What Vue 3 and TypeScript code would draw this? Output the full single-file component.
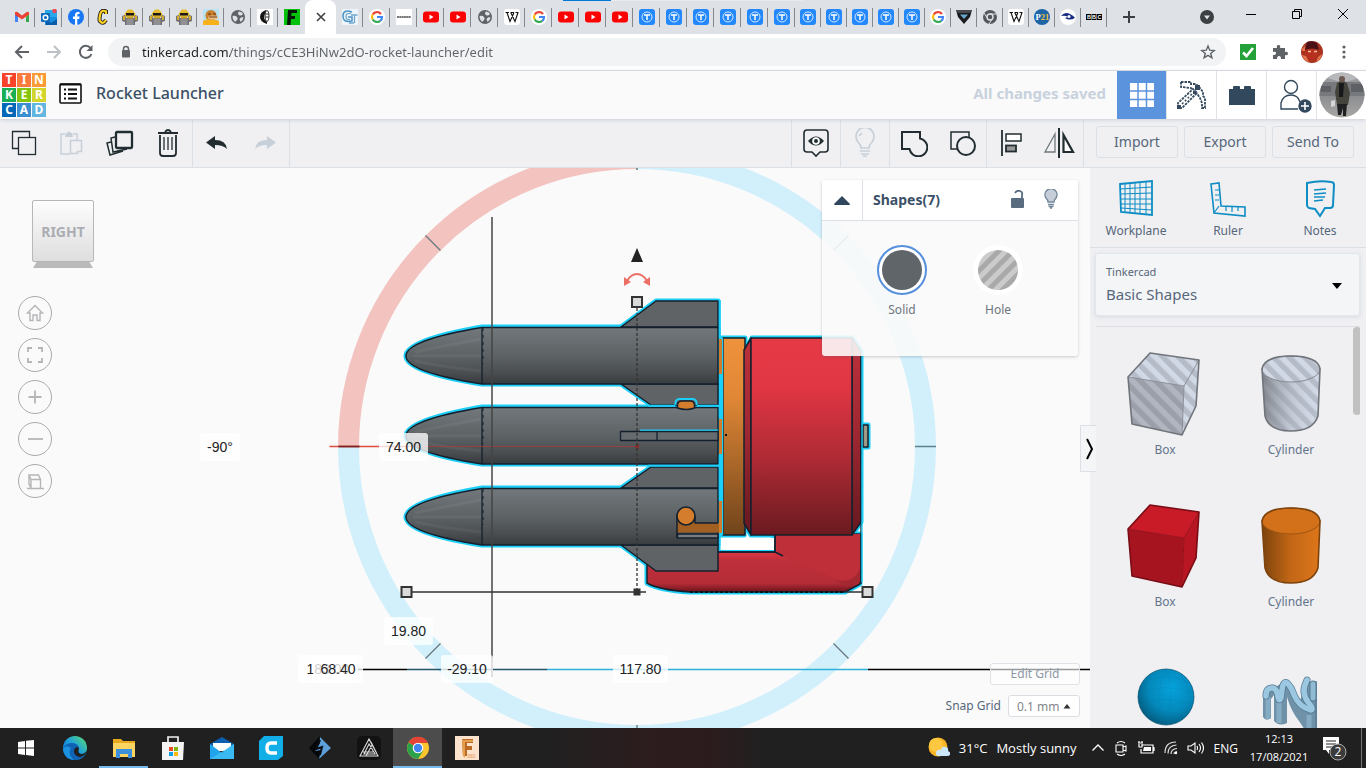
<script setup lang="ts">
import { ref } from 'vue'

const tabsBefore = ['gmail', 'outlook', 'facebook', 'comic', 'robot', 'robot', 'robot', 'dog', 'globe', 'ink', 'fgreen']
const tabsWide = ['gt', 'google', 'creality', 'youtube', 'youtube', 'globe', 'wiki', 'google', 'youtube', 'youtube', 'youtube', 'tee', 'tee', 'tee', 'tee', 'tee', 'tee']
const tabsNarrow = ['tee', 'tee', 'tee', 'tee', 'tee', 'google', 'gem', 'chromium', 'wiki', 'p21', 'eye', 'bbc']

const url = ref('tinkercad.com/things/cCE3HiNw2dO-rocket-launcher/edit')

const logo = [
  { ch: 'T', bg: '#f8432a' }, { ch: 'I', bg: '#fb7b3c' }, { ch: 'N', bg: '#fb9b35' },
  { ch: 'K', bg: '#1aae54' }, { ch: 'E', bg: '#85c40c' }, { ch: 'R', bg: '#d3d52c' },
  { ch: 'C', bg: '#0368b8' }, { ch: 'A', bg: '#3b8fd0' }, { ch: 'D', bg: '#62b6e0' },
]

const viewButtons = ['home', 'fit', 'plus', 'minus', 'ortho']
const viewTitles = ['Home view', 'Fit all in view', 'Zoom in', 'Zoom out', 'Switch to flat view']

interface Dim { x: number; y: number; w: number; value: string; name: string }
const stage = { w: 1090, h: 560 }
const dims: Dim[] = [
  { x: 200, y: 265, w: 40, value: '-90°', name: 'Rotation' },
  { x: 379, y: 265, w: 49, value: '74.00', name: 'Height' },
  { x: 384, y: 449, w: 49, value: '19.80', name: 'Elevation' },
  { x: 298, y: 487, w: 60, value: '183.00', name: 'Offset X' },
  { x: 313, y: 487, w: 50, value: '68.40', name: 'Length' },
  { x: 441, y: 487, w: 52, value: '-29.10', name: 'Offset Y' },
  { x: 613, y: 487, w: 55, value: '117.80', name: 'Width' },
]
function place(d: Dim) {
  return { left: (d.x / stage.w) * 100 + '%', top: (d.y / stage.h) * 100 + '%', width: d.w + 'px' }
}

const rockets = [0, 80, 161]

interface Shape { id: string; name: string; caption: boolean }
const shapes: Shape[] = [
  { id: 'box-hole', name: 'Box', caption: true }, { id: 'cyl-hole', name: 'Cylinder', caption: true },
  { id: 'box-red', name: 'Box', caption: true }, { id: 'cyl-orange', name: 'Cylinder', caption: true },
  { id: 'sphere', name: 'Sphere', caption: false }, { id: 'scribble', name: 'Scribble', caption: false },
]
const category = ref('Basic Shapes')
const snap = ref('0.1 mm')
const apps = ['windows', 'edge', 'explorer', 'store', 'mail', 'cura', 'flash', 'affinity', 'chrome', 'fusion']
</script>

<template>
  <svg class="defs" aria-hidden="true">
    <defs>
      <linearGradient id="grey" x1="0" y1="0" x2="0" y2="1"><stop offset="0" stop-color="#72787b" /><stop offset=".5" stop-color="#5d6265" /><stop offset=".8" stop-color="#4a4e50" /><stop offset="1" stop-color="#383b3d" /></linearGradient>
      <linearGradient id="drum" x1="0" y1="0" x2="0" y2="1"><stop offset="0" stop-color="#e63946" /><stop offset=".25" stop-color="#e03643" /><stop offset=".6" stop-color="#b02b35" /><stop offset="1" stop-color="#6a1a20" /></linearGradient>
      <linearGradient id="drumside" x1="0" y1="0" x2="0" y2="1"><stop offset="0" stop-color="#bd303b" /><stop offset=".5" stop-color="#9d2731" /><stop offset="1" stop-color="#64181e" /></linearGradient>
      <linearGradient id="plate" x1="0" y1="0" x2="0" y2="1"><stop offset="0" stop-color="#ef923c" /><stop offset=".3" stop-color="#e08736" /><stop offset="1" stop-color="#70441b" /></linearGradient>
      <linearGradient id="base" x1="0" y1="0" x2="0" y2="1"><stop offset="0" stop-color="#bd2f3a" /><stop offset=".35" stop-color="#d93441" /><stop offset=".45" stop-color="#bf303b" /><stop offset=".85" stop-color="#b42c36" /><stop offset="1" stop-color="#6c131c" /></linearGradient>
      <linearGradient id="cylo" x1="0" x2="1"><stop offset="0" stop-color="#7d430c" /><stop offset=".5" stop-color="#c36716" /><stop offset="1" stop-color="#dd761a" /></linearGradient>
      <linearGradient id="cylg" x1="0" x2="1"><stop offset="0" stop-color="#70747b" stop-opacity=".8" /><stop offset=".55" stop-color="#a5abb5" stop-opacity=".3" /><stop offset="1" stop-color="#c8d0de" stop-opacity="0" /></linearGradient>
      <radialGradient id="ball" cx=".6" cy=".35" r=".75"><stop offset="0" stop-color="#05a2dc" /><stop offset=".55" stop-color="#0488ba" /><stop offset="1" stop-color="#02506f" /></radialGradient>
      <pattern id="hatch" width="11" height="11" patternUnits="userSpaceOnUse" patternTransform="rotate(-45)"><rect width="11" height="11" fill="#d2d9e6" /><rect width="5.5" height="11" fill="#b5bcc8" /></pattern>
      <pattern id="hatchd" width="11" height="11" patternUnits="userSpaceOnUse" patternTransform="rotate(-45)"><rect width="11" height="11" fill="#b0b5c0" /><rect width="5.5" height="11" fill="#9a9fa9" /></pattern>
      <pattern id="holes" width="10" height="10" patternUnits="userSpaceOnUse" patternTransform="rotate(45)"><rect width="10" height="10" fill="#cbcbcb" /><rect width="5" height="10" fill="#a9a9a9" /></pattern>
      <linearGradient id="edgeg" x1="0" x2="1" y1="1" y2="0"><stop offset="0" stop-color="#0c59a4" /><stop offset=".5" stop-color="#1b9de2" /><stop offset="1" stop-color="#5ee06a" /></linearGradient>
      <linearGradient id="foto" x1="0" x2="0" y1="0" y2="1"><stop offset="0" stop-color="#a2a3a6" /><stop offset=".5" stop-color="#8b8c8f" /><stop offset="1" stop-color="#a9a8a7" /></linearGradient>

      <!-- favicons -->
      <symbol id="f-gmail" viewBox="0 0 16 16"><path d="M1 3v10h3V7z" fill="#4285f4" /><path d="M12 7v6h3V3z" fill="#34a853" /><path d="M1 3v2.500l3 2.500V3.500z" fill="#c5221f" /><path d="M12 4l3-1v2.500l-3 2.500z" fill="#fbbc04" /><path d="M1 3.500Q2.500 2 4 3.500l4 3 4-3Q13.500 2 15 3.500v2L8 10.500 1 5.500z" fill="#ea4335" /></symbol>
      <symbol id="f-outlook" viewBox="0 0 16 16"><rect x="4" y="1" width="12" height="13" fill="#28a8ea" /><path d="M4 8l12 0v8H4z" fill="#1490df" /><path d="M5 10l5 4 6-4v6H5z" fill="#0a5ba8" /><rect y="4" width="9" height="9" rx="1" fill="#0f6cbd" /><circle cx="4.500" cy="8.500" r="2.300" fill="none" stroke="#fff" stroke-width="1.400" /><circle cx="13.500" cy="2" r="2.300" fill="#e94b55" /></symbol>
      <symbol id="f-facebook" viewBox="0 0 16 16"><circle cx="8" cy="8" r="8" fill="#1877f2" /><path d="M7 16V10H5V7.500h2V6q0-3 3-3h1.500v2H10.300q-1 0-1 1v1.500h2.300L11.200 10H9.300v6z" fill="#fff" /></symbol>
      <symbol id="f-comic" viewBox="0 0 16 16"><path d="M11 5V2.500Q6 0 5 6t0 6q3 4 6-1" fill="none" stroke="#222" stroke-width="4" /><path d="M11 5V2.500Q6 0 5 6t0 6q3 4 6-1" fill="none" stroke="#ffd21f" stroke-width="2.200" /></symbol>
      <symbol id="f-robot" viewBox="0 0 16 16"><path d="M3 4l3-3.500h4L13 4l1 4H2z" fill="#e8bd32" /><path d="M0 7l3-1 1 3h8l1-3 3 1v5l-3 1v3H3v-3l-3-1z" fill="#6f6f72" /><path d="M1 7h2v4H1zM13 7h2v4h-2z" fill="#d1ac34" /><rect x="4" y="4" width="8" height="2.500" fill="#1b1a18" /><path d="M5 7.500h6v2H5z" fill="#caa22a" /><path d="M4.500 11h7M4.500 13h7M4.500 15h7" stroke="#c4c4c4" stroke-width=".8" /></symbol>
      <symbol id="f-dog" viewBox="0 0 16 16"><rect width="16" height="16" fill="#b9e1f4" /><circle cx="8" cy="6.500" r="5.500" fill="#c9812d" /><path d="M0 16v-4q4-3 8-1 4-1 8 1v4z" fill="#f6b11b" /><ellipse cx="10" cy="8.500" rx="5" ry="2" fill="#efc48c" /><path d="M5 5h3M10 5h3M6 8h8" stroke="#6b3210" /></symbol>
      <symbol id="f-globe" viewBox="0 0 16 16"><circle cx="8" cy="8" r="7" fill="#5f6368" /><path d="M2.500 7q3-1 4.500 1t-1 4l-1 1Q2 10 2.500 7zM9 2.500q-2 2 0 3.500t4-1L12 3.500zM13.500 8q-3 0-4 2l1 3q3-2 3-5z" fill="#dee1e6" /></symbol>
      <symbol id="f-ink" viewBox="0 0 16 16"><rect width="16" height="16" fill="#fff" /><path d="M9 1Q3 3 3 8t7 7V12Q7 11 7 8t3-4z" fill="#161616" /><ellipse cx="10" cy="7" rx="2" ry="5.500" fill="#fff" stroke="#333" /><path d="M8 8h4M8 5h4" stroke="#333" /></symbol>
      <symbol id="f-fgreen" viewBox="0 0 16 16"><rect width="16" height="16" fill="#05c10b" /><path d="M3 16L4 1h9v3H7.500L7.300 7H11v3H7L6.500 16z" fill="#06170a" /></symbol>
      <symbol id="f-gt" viewBox="0 0 16 16"><rect width="16" height="16" fill="#edf5fa" /><path d="M10 3Q1 0 1 7t9 5V8H6" fill="none" stroke="#4f93c5" stroke-width="1.500" /><path d="M9 4.500q-5-1-5 3t4 3M9 6h6.500M12.500 6v8M7 14h5" stroke="#70a8cf" stroke-width="1.300" fill="none" /></symbol>
      <symbol id="f-google" viewBox="0 0 16 16"><circle cx="8" cy="8" r="8" fill="#fff" /><path d="M12 5A5 5 0 0 0 3.700 5.500" stroke="#ea4335" stroke-width="2.200" fill="none" /><path d="M3.700 5.500a5 5 0 0 0 0 5" stroke="#fbbc05" stroke-width="2.200" fill="none" /><path d="M3.700 10.500a5 5 0 0 0 7.600 1.300" stroke="#34a853" stroke-width="2.200" fill="none" /><path d="M11.300 11.800Q13 10.500 13 8H8" stroke="#4285f4" stroke-width="2.200" fill="none" /></symbol>
      <symbol id="f-creality" viewBox="0 0 16 16"><rect width="16" height="16" fill="#fff" /><path d="M1 8h14" stroke="#4a4a4a" stroke-width="1.500" stroke-dasharray="2 .3" /></symbol>
      <symbol id="f-youtube" viewBox="0 0 16 16"><rect y="2.500" width="16" height="11" rx="3" fill="#f00" /><path d="M6.500 5.500v5l4-2.500z" fill="#fff" /></symbol>
      <symbol id="f-wiki" viewBox="0 0 16 16"><rect width="16" height="16" rx="3" fill="#fff" /><path d="M1.500 3.500H5M6.500 3.500h3.500M11.500 3.500h3M3 3.500l3 9 4-9M6.800 3.500l4.200 9 3-9" stroke="#111" stroke-width="1.100" fill="none" /></symbol>
      <symbol id="f-tee" viewBox="0 0 16 16"><rect width="16" height="16" rx="3" fill="#2388fb" /><circle cx="8" cy="8" r="5" fill="none" stroke="#d6e9ff" /><path d="M5 6h6M8 6v5" stroke="#fff" stroke-width="1.500" /></symbol>
      <symbol id="f-gem" viewBox="0 0 16 16"><path d="M0 1h16l-2 7-6 7-6-7z" fill="#1b1b1d" /><path d="M4 5.500h8L8 10z" fill="#69a9cd" /><path d="M0 1h16l-2 3H2z" fill="#4a4b4f" /></symbol>
      <symbol id="f-chromium" viewBox="0 0 16 16"><circle cx="8" cy="8" r="7" fill="#54575c" /><circle cx="8" cy="8" r="3" fill="#54575c" stroke="#dee1e6" stroke-width="1.400" /><path d="M8 5h6.500M5.500 9.500L2 4M10.500 9.500L7 15" stroke="#dee1e6" /></symbol>
      <symbol id="f-p21" viewBox="0 0 16 16"><circle cx="8" cy="8" r="8" fill="#1e65a8" /><text x="1.500" y="11" font-family="Liberation Serif" font-weight="700" font-size="8.500" fill="#fff">P<tspan fill="#f2c43b">21</tspan></text></symbol>
      <symbol id="f-eye" viewBox="0 0 16 16"><circle cx="8" cy="8" r="8" fill="#fff" /><path d="M1 7q4-5 9-2 4 2 5 4-6 3-10 0l3-1Q5 6 1 7z" fill="#182b83" /><circle cx="9" cy="7.500" r="1.500" fill="#fff" /></symbol>
      <symbol id="f-bbc" viewBox="0 0 16 16"><path d="M0 5h5v6H0zM5.500 5h5v6h-5zM11 5h5v6h-5z" fill="#000" /><g font-family="Liberation Sans" font-weight="700" font-size="5.500" fill="#fff"><text x="1" y="10">B</text><text x="6" y="10">B</text><text x="11.500" y="10">C</text></g></symbol>

      <!-- camera controls -->
      <symbol id="v-home" viewBox="0 0 34 34"><path d="M9.500 17L17 9.500 24.500 17H22v7.500h-3V19h-4v5.500h-3V17z" fill="none" stroke="#b5b5b8" stroke-width="1.400" /></symbol>
      <symbol id="v-fit" viewBox="0 0 34 34"><path d="M10 14v-4h4M20 10h4v4M24 20v4h-4M14 24h-4v-4" fill="none" stroke="#b5b5b8" stroke-width="1.800" /></symbol>
      <symbol id="v-plus" viewBox="0 0 34 34"><path d="M10.500 17h13M17 10.500v13" stroke="#b5b5b8" stroke-width="1.800" /></symbol>
      <symbol id="v-minus" viewBox="0 0 34 34"><path d="M10 17h15" stroke="#b5b5b8" stroke-width="1.800" /></symbol>
      <symbol id="v-ortho" viewBox="0 0 34 34"><path d="M9 24.500h17M13 24.500v-9h9.500v9M13 15.500l-2-4.500h9.500l2 4.500M11 11v9l2 4" fill="none" stroke="#b5b5b8" stroke-width="1.400" /></symbol>

      <!-- library shapes -->
      <symbol id="s-box-hole" viewBox="0 0 90 96"><path d="M8 28L30 4l49 7-3 46-14 29-50-11z" fill="url(#hatch)" /><path d="M8 28l56 9-2 49-50-11z" fill="url(#hatchd)" /><path d="M8 28l56 9L79 11M64 37l-2 49" stroke="#8b9098" fill="none" /><path d="M8 28L30 4l49 7-3 46-14 29-50-11z" fill="none" stroke="#70757b" stroke-width="1.600" stroke-linejoin="round" /></symbol>
      <symbol id="s-box-red" viewBox="0 0 90 96"><path d="M8 28L30 4l49 7-15 26z" fill="#c81a27" /><path d="M8 28l56 9-2 49-50-11z" fill="#a6141f" /><path d="M64 37L79 11l-3 46-14 29z" fill="#b91623" /><path d="M8 28l56 9L79 11M64 37l-2 49" stroke="#980f1b" fill="none" /><path d="M8 28L30 4l49 7-3 46-14 29-50-11z" fill="none" stroke="#780d16" stroke-width="1.600" stroke-linejoin="round" /></symbol>
      <symbol id="s-cyl-hole" viewBox="0 0 90 96"><path d="M16 20l3 47q4 14 26 15t27-15l2-47z" fill="url(#hatch)" /><path d="M16 20l3 47q4 14 26 15t27-15l2-47z" fill="url(#cylg)" /><ellipse cx="45" cy="20" rx="29" ry="13" fill="url(#hatch)" stroke="#858a92" /><path d="M16 20Q18 7 45 7t29 13l-2 47q-5 15-27 15T19 67z" fill="none" stroke="#70757b" stroke-width="1.600" /></symbol>
      <symbol id="s-cyl-orange" viewBox="0 0 90 96"><path d="M16 20l3 47q4 14 26 15t27-15l2-47z" fill="url(#cylo)" /><ellipse cx="45" cy="20" rx="29" ry="13" fill="#d27119" stroke="#a05511" /><path d="M16 20Q18 7 45 7t29 13l-2 47q-5 15-27 15T19 67z" fill="none" stroke="#7d430d" stroke-width="1.600" /></symbol>
      <symbol id="s-sphere" viewBox="0 0 90 96"><g transform="translate(0 3)"><circle cx="46" cy="41" r="28" fill="url(#ball)" stroke="#034f70" stroke-width=".7" /><path d="M22 27q24-12 48 0M18 38q28-13 56 0M19 49q27-11 54 0M26 60q20-8 40 0M46 13q-14 28 0 56M46 13q10 28 0 56M35 16q-24 25 0 50M58 16q22 25 0 50" fill="none" stroke="#037aa8" stroke-width=".5" opacity=".4" /></g></symbol>
      <symbol id="s-scribble" viewBox="0 0 90 96">
        <path d="M17 42v22q3 5 8 1V46l3-4v26q5 6 13 2V44q4 14 12 24l8 12h10V28l-8 2-6 8-3 10-14-18H36z" fill="#6f92a8" />
        <path d="M22 44v22M33 50v20M63 62v18" stroke="#86acc4" stroke-width="5" />
        <path d="M70 30v50" stroke="#5f8298" stroke-width="2" />
        <g fill="none" stroke-linecap="round" stroke-linejoin="round">
          <path d="M20 43q0-9 7-8 4 1 5 9 1 5 3 1l1-8q1-9 5-7 4 3 7 12 5 12 17 15 3-1-3-8-6-8-3-17l2-5M67 31v14" stroke="#557b92" stroke-width="7" />
          <path d="M20 43q0-9 7-8 4 1 5 9 1 5 3 1l1-8q1-9 5-7 4 3 7 12 5 12 17 15 3-1-3-8-6-8-3-17l2-5" stroke="#9cc7e1" stroke-width="5.500" />
          <path d="M67 31v14" stroke="#91bad3" stroke-width="5" />
        </g>
      </symbol>

      <!-- taskbar -->
      <symbol id="t-windows" viewBox="0 0 24 24"><path d="M4 6l7-1v6.500H4zM12 4.800L20 4v7.500h-8zM4 12.500h7V19l-7-1zM12 12.500h8V20l-8-1z" fill="#fff" /></symbol>
      <symbol id="t-edge" viewBox="0 0 24 24"><circle cx="12" cy="12" r="12" fill="url(#edgeg)" /><path d="M0 13Q3 6 10 7q6 1 6 6-2 4 2 5t5-1q-3 7-11 7Q1 24 0 13z" fill="#0f62b4" /><path d="M8 12q-4 6 3 12Q1 23 0 13q3-5 8-1z" fill="#1a92df" /><path d="M16 13q-2 4 2 5 4 0 6-4l-1 3q-3 4-7 4-6-2-5-7 1-3 4-3z" fill="#202020" /></symbol>
      <symbol id="t-explorer" viewBox="0 0 24 24"><path d="M1 3h8l2 2h12v16H1z" fill="#e9a91e" /><path d="M1 7h22v14H1z" fill="#fcd462" /><path d="M4 13h16v9h-4v-4H8v4H4z" fill="#3c8fdb" /></symbol>
      <symbol id="t-store" viewBox="0 0 24 24"><path d="M7 6V1h10v5" fill="none" stroke="#f0f0f0" stroke-width="1.700" /><path d="M1 6h22l-1 18H1z" fill="#f4f4f4" /><path d="M8 11h4v4H8z" fill="#e74c25" /><path d="M13 11h4v4h-4z" fill="#7cb80b" /><path d="M8 16h4v4H8z" fill="#0fa2e9" /><path d="M13 16h4v4h-4z" fill="#fab80b" /></symbol>
      <symbol id="t-mail" viewBox="0 0 24 24"><path d="M0 8l12-7 12 7v5H0z" fill="#0e5faf" /><path d="M3 7h18v8H3z" fill="#fff" /><path d="M0 8l12 9L24 8v15H0z" fill="#22a4ec" /><path d="M0 23l24-15v15z" fill="#43c3f5" opacity=".7" /></symbol>
      <symbol id="t-cura" viewBox="0 0 24 24"><path d="M5 0h19v20l-5 4H0V5z" fill="#11aee8" /><path d="M18 7h-6q-4 0-4 5t4 5h6" fill="none" stroke="#fff" stroke-width="3.500" /></symbol>
      <symbol id="t-flash" viewBox="0 0 24 24"><path d="M12 0L1 12l11 12V14l-4 1z" fill="#060709" /><path d="M12 1v6l-5 8 6-1-2 9 12-11z" fill="#5d9fd8" /><path d="M12 4l-4 9 6-2-2 8" fill="none" stroke="#0a0d12" stroke-width="2" /></symbol>
      <symbol id="t-affinity" viewBox="0 0 24 24"><rect width="24" height="24" rx="5" fill="#121212" /><path d="M12 3L3 20h18zM12 8L7 18h11zM9 20l6-11M6 16h10M14 6l6 12" fill="none" stroke="#ddd" stroke-width="1.100" /></symbol>
      <symbol id="t-chrome" viewBox="0 0 24 24"><circle cx="12" cy="12" r="11" fill="#fbc52d" /><path d="M12 12L2.500 6.500A11 11 0 0 1 22 7H12z" fill="#e54335" /><path d="M12 12l-9.500-5.500A11 11 0 0 0 12 23l5-8z" fill="#2ca14c" /><circle cx="12" cy="12" r="5.300" fill="#fff" /><circle cx="12" cy="12" r="4.200" fill="#4285f4" /></symbol>
      <symbol id="t-fusion" viewBox="0 0 24 24"><rect width="24" height="24" fill="#fbe3ce" /><path d="M7 3h11v4h-6v3h5v4h-5v6H8z" fill="#b96a24" /><path d="M7 3l3 2v17l-2-2zM9 4h9v2H9z" fill="#e59d4f" /><text x="12" y="22" font-family="Liberation Sans" font-size="5" fill="#e98f44">360</text></symbol>
    </defs>
  </svg>

  <div class="desktop">
    <div class="tabstrip">
      <div class="loadbar"><i></i></div>
      <button v-for="(t, i) in tabsBefore" :key="'a' + i" class="tab" :class="{ last: i === 10 }" :aria-label="t"><svg width="16" height="16"><use :href="'#f-' + t" /></svg></button>
      <button class="tab active" aria-label="Close tab"><svg width="12" height="12" viewBox="0 0 12 12"><path d="M2 2l8 8M10 2l-8 8" stroke="#3c4043" stroke-width="1.600" /></svg></button>
      <button v-for="(t, i) in tabsWide" :key="'b' + i" class="tab" :aria-label="t"><svg width="16" height="16"><use :href="'#f-' + t" /></svg></button>
      <button v-for="(t, i) in tabsNarrow" :key="'c' + i" class="tab narrow" :aria-label="t"><svg width="16" height="16"><use :href="'#f-' + t" /></svg></button>
      <button class="newtab" aria-label="New tab"><svg width="14" height="14" viewBox="0 0 14 14"><path d="M7 1v12M1 7h12" stroke="#3c4043" stroke-width="2" /></svg></button>
      <div class="grow"></div>
      <button class="tabsearch" aria-label="Search tabs"><svg width="14" height="14" viewBox="0 0 14 14"><circle cx="7" cy="7" r="7" fill="#3c4043" /><path d="M4 5.500h6L7 9.500z" fill="#dee1e6" /></svg></button>
      <button class="win" aria-label="Minimise"><svg width="12" height="12" viewBox="0 0 12 12"><path d="M1 6.500h10" stroke="#000" /></svg></button>
      <button class="win" aria-label="Restore"><svg width="12" height="12" viewBox="0 0 12 12"><path d="M1.500 3.500h7v7h-7zM3.500 3.500v-2h7v7h-2" fill="none" stroke="#000" /></svg></button>
      <button class="win" aria-label="Close"><svg width="12" height="12" viewBox="0 0 12 12"><path d="M1 1l10 10M11 1L1 11" stroke="#000" /></svg></button>
    </div>

    <div class="navbar">
      <button class="nav" aria-label="Back"><svg width="16" height="16" viewBox="0 0 16 16"><path d="M15 8H2M8 2L2 8l6 6" fill="none" stroke="#5f6368" stroke-width="2" /></svg></button>
      <button class="nav" aria-label="Forward"><svg width="16" height="16" viewBox="0 0 16 16"><path d="M1 8h13M8 2l6 6-6 6" fill="none" stroke="#bdc1c6" stroke-width="2" /></svg></button>
      <button class="nav" aria-label="Reload"><svg width="16" height="16" viewBox="0 0 16 16"><path d="M13.500 10A6 6 0 1 1 12.500 4" fill="none" stroke="#5f6368" stroke-width="2" /><path d="M14.500 1v6h-6z" fill="#5f6368" /></svg></button>
      <div class="omnibox">
        <svg width="12" height="14" viewBox="0 0 12 14"><path d="M3.500 6V4a2.500 2.500 0 0 1 5 0v2" fill="none" stroke="#5f6368" stroke-width="1.500" /><rect x="2" y="5" width="8" height="7.500" rx="1" fill="#5f6368" /></svg>
        <input v-model="url" aria-label="Address" spellcheck="false" />
        <button aria-label="Bookmark"><svg width="16" height="16" viewBox="0 0 16 16"><path d="M8 2l1.700 4.200 4.500.3-3.500 2.900 1.200 4.400L8 11.400l-3.900 2.400 1.200-4.400L1.800 6.500l4.500-.3z" fill="none" stroke="#5f6368" stroke-width="1.400" /></svg></button>
      </div>
      <button class="nav" aria-label="Checker"><svg width="16" height="16" viewBox="0 0 16 16"><rect width="16" height="16" fill="#25a13a" /><path d="M3 8.500l3.500 3.500L13 4" fill="none" stroke="#fff" stroke-width="2.600" /></svg></button>
      <button class="nav" aria-label="Extensions"><svg width="16" height="16" viewBox="0 0 16 16"><path d="M1 4h4q-1-3 1.500-3T8 4h5v4q3-1 3 1.500T13 11v4H9q0-3-2-3t-2 3H1v-4q3 0 3-2T1 8z" fill="#5f6368" /></svg></button>
      <button class="nav" aria-label="Profile"><svg width="22" height="22" viewBox="0 0 22 22"><circle cx="11" cy="11" r="11" fill="#a83420" /><path d="M6 1q5-2 10 1l2 7q-7-3-14 0z" fill="#4a1016" /><path d="M5 9q6-2 12 0v4q-2 6-6 7-4-1-6-7z" fill="#b5301f" /><path d="M7 10.500h3M13 10.500h3" stroke="#ffc29a" stroke-width="1.700" /><path d="M1 14l4 1 3 6Q3 20 1 14zM21 13l-4 3-2 5q5-2 6-8zM1 8l3-3v5H1z" fill="#e5744d" /></svg></button>
      <button class="nav" aria-label="Menu"><svg width="4" height="16" viewBox="0 0 4 16"><circle cx="2" cy="3" r="1.600" fill="#5f6368" /><circle cx="2" cy="8" r="1.600" fill="#5f6368" /><circle cx="2" cy="13" r="1.600" fill="#5f6368" /></svg></button>
    </div>

    <header class="head">
      <a href="#" class="logo" aria-label="Tinkercad home"><span v-for="c in logo" :key="c.ch" :style="{ background: c.bg }">{{ c.ch }}</span></a>
      <button class="list" aria-label="Designs"><svg width="24" height="22" viewBox="0 0 24 22"><rect x="1" y="1" width="21" height="19" rx="1" fill="#fff" stroke="#111" stroke-width="1.600" /><path d="M1 1.500h21" stroke="#111" stroke-width="2" /><path d="M5 6.500h2M5 11h2M5 15.500h2M9 6.500h9M9 11h9M9 15.500h9" stroke="#111" stroke-width="2" /></svg></button>
      <h1>Rocket Launcher</h1>
      <div class="grow"></div>
      <span class="saved">All changes saved</span>
      <button class="mode on" aria-label="3D design"><svg width="26" height="26" viewBox="0 0 26 26"><rect x="1" y="1" width="24" height="24" fill="#fff" /><path d="M9 0v26M17.500 0v26M0 9h26M0 17.500h26" stroke="#5b93dc" stroke-width="1.500" /></svg></button>
      <button class="mode" aria-label="Blocks"><svg width="32" height="32" viewBox="0 0 32 32"><path d="M5 3h10v2h5l2 2 2 2 3 4v4l2 2v10h-3v-5l-2-5-4-6-5-4-10-1z" fill="#fff" stroke="#354a5e" stroke-width="1.800" stroke-dasharray="2.500 1" /><path d="M2 29v-5l15-14 4 4L6 29z" fill="#fff" stroke="#354a5e" stroke-width="1.800" stroke-dasharray="2.500 1" /><path d="M1 26h4v4H1zM19 6h5v5h-5zM17 12h3v3h-3z" fill="#354a5e" /><path d="M6 25l12-12" stroke="#354a5e" stroke-width="1.500" stroke-dasharray="2 2" /></svg></button>
      <button class="mode" aria-label="Bricks"><svg width="28" height="24" viewBox="0 0 28 24"><path d="M1 22V6h4V4q0-1 1-1h5q1 0 1 1v2h4V4q0-1 1-1h5q1 0 1 1v2h4v16z" fill="#32485d" /></svg></button>
      <button class="mode invite" aria-label="Invite"><svg width="34" height="38" viewBox="0 0 34 38"><circle cx="12" cy="9" r="6.500" fill="none" stroke="#32485d" stroke-width="1.400" /><path d="M21 24q-2-7-9-7-8 0-10 8v6h17" fill="none" stroke="#32485d" stroke-width="1.400" /><circle cx="26" cy="28" r="6.700" fill="#32485d" /><path d="M22 28h8M26 24v8" stroke="#fff" stroke-width="1.600" /></svg></button>
      <button class="avatar" aria-label="Account"><svg width="46" height="46" viewBox="0 0 46 46"><defs><clipPath id="av"><circle cx="23" cy="23" r="22.500" /></clipPath></defs><g clip-path="url(#av)"><rect width="46" height="46" fill="url(#foto)" /><path d="M0 10h46v14H0z" fill="#77797d" /><path d="M0 3l24 8L46 4V0H0z" fill="#b7b8bb" /><path d="M2 14h10v6H2zM32 12h12v8H32z" fill="#5d6065" /><path d="M18 11l3-2h4l3 2 3 10-2 12H18l-2-13z" fill="#45443c" /><path d="M20 11h5l-1 14h-4z" fill="#17181a" /><circle cx="23" cy="7" r="3" fill="#6d5b53" /><path d="M18 32h10l-1 12h-3v-8l-2 7h-3z" fill="#1f2022" /><path d="M12 29l4-1v6l-4 1z" fill="#d5d6d8" /></g></svg></button>
    </header>

    <div class="tools">
      <div class="group first">
        <button aria-label="Copy"><svg width="26" height="26" viewBox="0 0 26 26"><path d="M7 18.500H1.500v-17h17V7" fill="none" stroke="#212d31" stroke-width="1.300" /><rect x="7.500" y="7.500" width="17" height="17" fill="none" stroke="#212d31" stroke-width="1.300" /></svg></button>
        <button aria-label="Paste"><svg width="26" height="26" viewBox="0 0 26 26"><path d="M11 24H2V4h4M14 4h4v6" fill="none" stroke="#c7d0d9" stroke-width="1.500" /><path d="M6 7h8l-1-4h-1q-2-3-4 0H7z" fill="#c7d0d9" /><path d="M11.500 10.500h11v11h-4v2h-7z" fill="#f0f0f3" stroke="#c7d0d9" stroke-width="1.500" /></svg></button>
        <button aria-label="Duplicate"><svg width="28" height="28" viewBox="0 0 28 28"><path d="M5 13l-4 1 3 12 13-4M9 8L5 9l2 14 14-3" fill="none" stroke="#212d31" stroke-width="1.500" /><rect x="10" y="3" width="16" height="16" rx="1" fill="#f0f0f3" stroke="#212d31" stroke-width="2.300" /></svg></button>
        <button aria-label="Delete"><svg width="24" height="30" viewBox="0 0 24 30"><path d="M2 5h20M9 4q3-4 6 0M4 7v18q0 3 3 3h10q3 0 3-3V7" fill="none" stroke="#212d31" stroke-width="1.800" /><path d="M8 9v13M12 9v13M16 9v13" stroke="#212d31" stroke-width="1.300" /></svg></button>
      </div>
      <div class="group undo">
        <button aria-label="Undo"><svg width="22" height="14" viewBox="0 0 22 14"><path d="M0 6.500L9 0v4q11 0 12 9-4-4-12-4v4z" fill="#212d31" /></svg></button>
        <button aria-label="Redo"><svg width="22" height="14" viewBox="0 0 22 14"><path d="M22 6.500L13 0v4Q2 4 1 13q4-4 12-4v4z" fill="#c7d0d9" /></svg></button>
      </div>
      <div class="grow"></div>
      <div class="group one"><button aria-label="Show hidden"><svg width="26" height="30" viewBox="0 0 26 30"><path d="M4 2h18q3 0 3 3v16q0 3-3 3h-5l-4 4-4-4H4q-3 0-3-3V5q0-3 3-3z" fill="none" stroke="#212d31" stroke-width="1.600" /><path d="M5 13q8-9 16 0-8 9-16 0z" fill="#212d31" /><circle cx="13" cy="13" r="3.800" fill="#fff" /><circle cx="13" cy="13" r="2" fill="#212d31" /></svg></button></div>
      <div class="group one"><button aria-label="Hide selected"><svg width="22" height="30" viewBox="0 0 22 30"><path d="M7 20q0-3-3-6a9 9 0 1 1 14 0q-3 3-3 6zM5 8l3-3" fill="none" stroke="#c7d0d9" stroke-width="1.700" /><path d="M6 23h10M7 26h8M9 28h4" stroke="#c7d0d9" stroke-width="1.500" /></svg></button></div>
      <div class="group two"><button aria-label="Group"><svg width="28" height="28" viewBox="0 0 28 28"><path d="M2 3h18v6.500A9 9 0 1 1 9.500 20H2z" fill="none" stroke="#212d31" stroke-width="2" /></svg></button>
        <button aria-label="Ungroup"><svg width="28" height="28" viewBox="0 0 28 28"><path d="M9 20H3V3h18v6" fill="none" stroke="#212d31" stroke-width="1.500" /><circle cx="18" cy="17" r="9" fill="none" stroke="#212d31" stroke-width="2" /></svg></button></div>
      <div class="group two"><button aria-label="Align"><svg width="24" height="28" viewBox="0 0 24 28"><path d="M3 1v26" stroke="#212d31" stroke-width="1.800" /><rect x="7" y="5" width="15" height="7" fill="#fff" stroke="#212d31" stroke-width="1.500" /><rect x="7" y="16.500" width="10" height="6" fill="#999" stroke="#212d31" stroke-width="1.800" /></svg></button>
        <button aria-label="Mirror"><svg width="32" height="32" viewBox="0 0 32 32"><path d="M16 1v30" stroke="#212d31" stroke-width="2" /><path d="M12 7v18H2z" fill="none" stroke="#6f787c" stroke-width="1.300" /><path d="M20.500 8v17H30z" fill="#fff" stroke="#212d31" stroke-width="2.200" /></svg></button></div>
      <div class="files"><button>Import</button><button>Export</button><button>Send To</button></div>
    </div>

    <main class="work">
      <section class="viewport">
        <svg class="scene" viewBox="0 168 1090 560" preserveAspectRatio="none">
          <g fill="none" stroke-width="21">
            <path d="M348.500 447A288.500 288.500 0 1 0 637 158.500" stroke="#d2f0fb" />
            <path d="M348.500 447A288.500 288.500 0 0 1 637 158.500" stroke="#f3c3c0" />
          </g>
          <path d="M425.500 235.500l15 15M848.500 235.500l-15 15M425.500 658.500l15-15M848.500 658.500l-15-15M637 725v3" stroke="#66777d" stroke-width="1.300" />
          <path d="M637 168v2M915 446.500h21" stroke="#5b7f8e" stroke-width="1.500" />
          <path d="M355 669.500h52M868 669.500h222" stroke="#000" stroke-width="1.500" /><path d="M407 669.500h140" stroke="#25556a" stroke-width="1.500" /><path d="M547 669.500h321" stroke="#2fb1da" stroke-width="1.500" />
          <path d="M329.500 446.500H410" stroke="#df4b40" stroke-width="1.700" /><path d="M338.500 446.500h21" stroke="#7d2320" stroke-width="1.700" />

          <!-- selection halo -->
          <g fill="#1ccff8" stroke="#1ccff8" stroke-width="5" stroke-linejoin="round">
            <path d="M647 556v27q12 7 43 9h155l15-8v-50h-86v18H718z" />
            <path d="M719 338h26v14l7-14h100l9 13v171l-9 13H751l-7-12v12H719z" />
            <path d="M862 425h6v22h-6z" />
            <g v-for="y in rockets" :key="y" :transform="`translate(0 ${y})`"><path d="M482 327h236v57H482q-76-12-76-28t76-29z" /></g>
            <path d="M621 327l35-26h62v104h-67l-30-21zM621 488l30-21h67v104h-62l-35-26z" />
          </g>
          <path d="M721 538h53v12h-53z" fill="#fff" />

          <!-- body -->
          <g stroke="#14202e" stroke-width="1.500" stroke-linejoin="round">
            <path d="M647 552v31q12 7 43 9h155l15-8v-50h-85v18z" fill="url(#base)" />
            <path d="M776 534h84v42q-5 9-17 6l-66-28z" fill="#be2f3a" stroke="none" />
            <path d="M835 580q20 4 25-12v14l-14 5z" fill="#a32832" stroke="none" />
            <path d="M719 552h56v-17M775 552l8 4" fill="none" />
            <path d="M723 338h22v197h-22z" fill="url(#plate)" />
            <path d="M744 350l7-12v197l-7-12zM852 338l9 14v170l-9 13z" fill="url(#drumside)" />
            <path d="M751 338h101v197H751z" fill="url(#drum)" />
            <path d="M863 425h5v22h-5z" fill="#9d9b86" />
          </g>
          <path d="M861 352v232" stroke="#14202e" stroke-width="1.300" /><path d="M862 352v230" stroke="#1ccff8" stroke-width="1.300" />
          <path d="M690 592h155" stroke="#111" stroke-width="2" stroke-dasharray="3 2" />

          <!-- rockets -->
          <g stroke="#14202e" stroke-width="1.500" stroke-linejoin="round">
            <path d="M621 327l35-26h62v26zM621 384h97v21h-67zM621 488l30-21h67v21zM621 545h97v26h-62z" fill="#5f6366" />
            <g v-for="y in rockets" :key="y" :transform="`translate(0 ${y})`">
              <path d="M482 327.500h236v56.500H482q-76-12-76-28t76-28.500z" fill="url(#grey)" />
              <path d="M482 328v56" stroke-width="1.300" /><path d="M483 328v36" stroke-dasharray="3 4" stroke-width="1" />
              <path d="M415 352q28-6 66-13M415 361q28 6 66 10M413 356h68" fill="none" stroke="#fff" stroke-opacity=".05" stroke-width="3" />
            </g>
            <path d="M620.500 431.500H718v9h-97.500zM657 431.500v9" fill="#656b6f" stroke-width="1.300" />
            <path d="M675.500 405v-3q1-3 4-3h13q3 0 4 3v3" fill="none" stroke="#1ccff8" stroke-width="2" />
            <path d="M677.500 408v-4q1-3 4-3h9q3 0 4 3v4q-8 3-17 0z" fill="#d47d2c" />
            <path d="M677.500 534v4H718v-4z" fill="#777d80" />
            <path d="M677 517v15.500h44V523h-26v-6z" fill="#a25f22" stroke="none" />
            <path d="M677 514v24M695 516v7h23" fill="none" />
            <circle cx="686" cy="516" r="9" fill="#d47d2c" />
          </g>
          <g stroke="#1ccff8" fill="none">
            <path d="M648 405.800h27M697 405.800h22M648 465.700h71M719.800 300v38M719.800 405v12M719.800 455v45" stroke-width="2" />
            <path d="M722.500 338v197M640 430.200h78" stroke-width="1.300" />
          </g>
          <path d="M719 339h3v35h-3zM719 419h3v35h-3zM719 501h3v32h-3z" fill="#d07c2d" /><path d="M725 435h2" stroke="#111" stroke-width="2" />

          <!-- guides and handles -->
          <path d="M410 446.500h227" stroke="#b43934" stroke-opacity=".7" stroke-width="1.200" /><path d="M634 446.500l5-3v6z" fill="#87302e" />
          <path d="M492 217v460" stroke="#444" stroke-width="1.500" />
          <path d="M637 308v284" stroke="#333" stroke-width="1.300" stroke-dasharray="3 2" />
          <path d="M406 592h240M846 592h20" stroke="#333" stroke-width="1.500" />
          <g fill="#dadada" stroke="#333" stroke-width="2"><path d="M632 297h10v10h-10zM401.500 587h10v10h-10zM862.500 587h10v10h-10z" /></g>
          <path d="M633.500 588.500h7v7h-7z" fill="#333" /><path d="M637 248l6 14h-12z" fill="#222" />
          <path d="M627 281q4-7 10-7t10 7" fill="none" stroke="#eb6f65" stroke-width="2" /><path d="M624 277v9l7-4zM650 277v9l-7-4z" fill="#eb6f65" />
        </svg>

        <div class="cube"><span>RIGHT</span></div>
        <div class="camera"><button v-for="(v, i) in viewButtons" :key="v" :aria-label="viewTitles[i]"><svg width="34" height="34"><use :href="'#v-' + v" /></svg></button></div>
        <input v-for="d in dims" :key="d.name" class="dim" :value="d.value" :aria-label="d.name" :style="place(d)" />

        <div class="inspector">
          <div class="ihead">
            <button class="fold" aria-label="Collapse"><svg width="16" height="9" viewBox="0 0 16 9"><path d="M8 0l8 8q0 1-1 1H1Q0 9 0 8z" fill="#30475e" /></svg></button>
            <h2>Shapes(7)</h2>
            <button aria-label="Lock"><svg width="16" height="20" viewBox="0 0 16 20"><rect x="2" y="8" width="13" height="10" rx="1" fill="#596c80" /><path d="M6 3q2-3 5-2 3 1 2 4v3" fill="none" stroke="#596c80" stroke-width="1.800" /></svg></button>
            <button aria-label="Visibility"><svg width="16" height="22" viewBox="0 0 16 22"><path d="M5 13q0-2-2-4a6 6 0 1 1 10 0q-2 2-2 4z" fill="#c6cfd9" stroke="#72879b" stroke-width="1.400" /><path d="M5 15.500h6M5.500 17.500h5M7 19h2" stroke="#72879b" stroke-width="1.300" /></svg></button>
          </div>
          <div class="kinds">
            <button class="kind"><svg width="50" height="50" viewBox="0 0 50 50"><circle cx="25" cy="25" r="24" fill="#fff" stroke="#568fdc" stroke-width="2" /><circle cx="25" cy="25" r="20" fill="#5f6568" /></svg>Solid</button>
            <button class="kind"><svg width="50" height="50" viewBox="0 0 50 50"><circle cx="25" cy="25" r="25" fill="#fff" /><circle cx="25" cy="25" r="20" fill="url(#holes)" /></svg>Hole</button>
          </div>
        </div>

        <div class="grid-opts">
          <button class="editgrid">Edit Grid</button>
          <label><span>Snap Grid</span><span class="snap"><select v-model="snap"><option>0.1 mm</option><option>1.0 mm</option></select><svg width="8" height="5" viewBox="0 0 8 5"><path d="M4 0l3.500 4.500h-7z" fill="#333" /></svg></span></label>
        </div>
        <button class="drawer" aria-label="Hide shape panel"><svg width="8" height="24" viewBox="0 0 8 24"><path d="M1 2l5 10-5 10" fill="none" stroke="#000" stroke-width="2" /></svg></button>
      </section>

      <aside class="side">
        <div class="helpers">
          <button><svg width="36" height="38" viewBox="0 0 36 38"><g fill="none" stroke="#0d8dc4"><path d="M2 4l32-3v34L3 32z" stroke-width="1.800" /><path d="M7 3v29M12 3v30M17 2v31M22 2v32M28 2v32M2 9l32-2M2 14l32-1M3 19h31M3 24h31M3 28l31 2" /></g></svg>Workplane</button>
          <button><svg width="36" height="38" viewBox="0 0 36 38"><path d="M1 4l8-1 2 23 24 1v9L4 33z" fill="none" stroke="#0d8dc4" stroke-width="1.600" /><path d="M9 26l-5 7M5 10h4M5 15h4M5 20h4M16 27v4M22 27v5M28 27v4" stroke="#0d8dc4" stroke-width="1.200" /></svg>Ruler</button>
          <button><svg width="36" height="38" viewBox="0 0 36 38"><path d="M5 3Q18 0 29 2q3 0 3 3l-1 20q0 3-3 3h-5l-5 8-5-7-6-1q-2-1-2-3L5 6z" fill="none" stroke="#0d8dc4" stroke-width="2" /><path d="M12 10l12-1M12 14l12-1M12 17h11M12 21l9-1" stroke="#0d8dc4" stroke-width="1.500" /></svg>Notes</button>
        </div>
        <div class="picker">
          <label for="category">Tinkercad</label>
          <select id="category" v-model="category"><option>Basic Shapes</option><option>Text</option></select>
          <svg width="10" height="6" viewBox="0 0 10 6"><path d="M0 0h10L5 6z" fill="#000" /></svg>
        </div>
        <div class="shapes">
          <button v-for="s in shapes" :key="s.id" :aria-label="s.name"><svg width="90" height="96"><use :href="'#s-' + s.id" /></svg><span v-if="s.caption">{{ s.name }}</span></button>
          <i class="thumb"></i>
        </div>
      </aside>
    </main>

    <footer class="taskbar">
      <button v-for="a in apps" :key="a" class="app" :class="a" :aria-label="a"><svg width="24" height="24"><use :href="'#t-' + a" /></svg></button>
      <div class="grow"></div>
      <button class="weather"><svg width="22" height="22" viewBox="0 0 22 22"><circle cx="10" cy="10" r="9.500" fill="#fbb321" /><circle cx="8" cy="8" r="7" fill="#fdc840" /><path d="M10 19q-3-1-2-4t5-2q1-5 5-3 3 1 2 4 3 1 2 4-1 1-3 1z" fill="#cde7fa" /></svg><span>31°C</span><span>Mostly sunny</span></button>
      <div class="tray">
        <svg width="14" height="14" viewBox="0 0 14 14"><path d="M1.500 9.500L7 4l5.500 5.500" fill="none" stroke="#fff" stroke-width="1.300" /></svg>
        <svg width="14" height="16" viewBox="0 0 14 16"><path d="M3 3q4-3 8 0M3 14q4 3 8 0M2 5h7v7H2zM9 7l3-1v5l-3-1" fill="none" stroke="#fff" stroke-width="1.100" /></svg>
        <svg width="18" height="16" viewBox="0 0 18 16"><path d="M5 5h11v8H4V9M1 3h5M2 1v2M5 1v2M2 4v3h3V4M17 7v4" fill="none" stroke="#fff" stroke-width="1.200" /><path d="M7 7h7v4H6z" fill="#fff" /></svg>
        <svg width="14" height="14" viewBox="0 0 14 14"><path d="M1 12Q1 1 12 1M4 12.500q0-8 8.500-8.500M7 13q0-5 6-5.500M10 13q0-2 3-2.500" fill="none" stroke="#ddd" stroke-width="1.200" /><circle cx="12" cy="12" r="1.200" fill="#fff" /></svg>
        <svg width="17" height="14" viewBox="0 0 17 14"><path d="M1 5h3l4-3v10L4 9H1zM10 5q1 2 0 4M12 3q3 4 0 8M14.500 1.500q4 5.500 0 11" fill="none" stroke="#fff" stroke-width="1.100" /></svg>
      </div>
      <span class="lang">ENG</span>
      <div class="clock"><span>12:13</span><span>17/08/2021</span></div>
      <button class="notif" aria-label="2 notifications"><svg width="26" height="26" viewBox="0 0 26 26"><path d="M1 2h16v13H7v4l-3-4H1z" fill="#fff" /><path d="M4 6h10M4 9h10M4 12h6" stroke="#222" stroke-width="1.200" /><circle cx="16" cy="17" r="8" fill="#3b3b3b" stroke="#aaa" /><text x="16" y="21" text-anchor="middle" font-family="Open Sans" font-size="12" fill="#fff">2</text></svg></button>
      <i class="peek"></i>
    </footer>
  </div>
</template>

<style>
html, body { margin: 0; }
</style>
<style scoped>
* { box-sizing: border-box; }
button { border: 0; padding: 0; margin: 0; background: none; font: inherit; color: inherit; display: flex; align-items: center; justify-content: center; }
svg { display: block; flex: none; }
input, select { font: inherit; color: inherit; border: 0; background: none; margin: 0; appearance: none; outline: 0; }
.defs { position: absolute; width: 0; height: 0; }
.grow { flex: 1; }
.desktop { min-height: 100vh; height: 100vh; display: flex; flex-direction: column; font-family: "Noto Sans", "Open Sans", sans-serif; font-size: 12px; color: #56677a; overflow: hidden; background: #fafafa; }

.tabstrip { position: relative; display: flex; align-items: stretch; height: 34px; flex: none; background: #dee1e6; padding-left: 8px; }
.loadbar { position: absolute; left: 563px; top: 0; width: 240px; height: 1px; background: #e9eaec; }
.loadbar i { display: block; width: 48px; height: 1px; background: #0078d7; }
.tab { position: relative; width: 27px; }
.tab.narrow { width: 26px; }
.tab::after { content: ""; position: absolute; right: 0; top: 8px; width: 1px; height: 19px; background: #85888d; }
.tab.last::after, .tab.active::after { display: none; }
.tab.active { width: 31px; background: #fff; border-radius: 8px 8px 0 0; }
.newtab { width: 44px; }
.tabsearch { width: 42px; }
.win { width: 46px; padding-bottom: 6px; }

.navbar { display: flex; align-items: center; height: 37px; flex: none; background: #fff; padding: 0 6px; border-bottom: 1px solid #d9dbdf; }
.nav { width: 32px; height: 28px; }
.omnibox { display: flex; align-items: center; flex: 1; height: 28px; border-radius: 14px; background: #f1f3f4; margin: 0 6px; padding: 0 10px 0 12px; gap: 10px; }
.omnibox input { flex: 1; height: 28px; padding: 0; font-size: 13px; color: transparent; background: linear-gradient(90deg, #202124 88px, #5f6368 88px); background-clip: text; -webkit-background-clip: text; }

.head { position: relative; z-index: 3; display: flex; align-items: center; height: 48px; flex: none; background: #fafafa; box-shadow: 0 1px 4px #c9d0d9; }
.logo { display: grid; grid-template-columns: repeat(3, 14px); grid-auto-rows: 14px; gap: 1px; margin-left: 2px; text-decoration: none; }
.logo span { color: #fff; font-weight: 700; font-size: 12px; line-height: 14px; text-align: center; }
.list { margin-left: 13px; padding-bottom: 2px; }
h1 { margin: 0 0 0 13px; padding-bottom: 4px; font-size: 16px; font-weight: 500; line-height: 24px; color: #3c5167; }
.saved { font-size: 15px; line-height: 24px; padding-bottom: 4px; font-weight: 700; color: #c8d2dd; margin-right: 11px; }
.mode { width: 50px; height: 48px; background: #fff; border-right: 1px solid #dfe3e8; }
.mode.on { background: #5b93dc; }
.mode.invite { padding-left: 8px; padding-top: 4px; }
.avatar { width: 49px; height: 48px; background: #fff; }

.tools { display: flex; align-items: stretch; height: 49px; flex: none; background: #f0f0f3; border-bottom: 1px solid #dbe0e6; }
.group { display: flex; align-items: center; border-right: 1px solid #dbe0e6; }
.group button { width: 49px; height: 48px; }
.group.first { width: 193px; }
.group.first button { width: 48px; }
.group.undo { width: 97px; }
.group.one { width: 49px; }
.group.two { width: 97px; }
.tools .grow { border-right: 1px solid #dbe0e6; }
.files { display: flex; align-items: center; gap: 6px; padding: 0 12px 2px; }
.files button { width: 82px; height: 32px; padding-bottom: 1px; border: 1px solid #dbe0e6; border-radius: 3px; font-size: 14px; }

.work { flex: 1; min-height: 0; display: flex; }
.viewport { position: relative; flex: 1; min-width: 0; background: #fafafa; }
.scene { position: absolute; inset: 0; width: 100%; height: 100%; }
.cube { position: absolute; left: 32px; top: 32px; width: 62px; height: 62px; border: 1px solid #b7b7b7; border-radius: 2px; background: linear-gradient(#fdfdfd, #dedede); display: flex; align-items: center; justify-content: center; color: #abadb3; font-size: 14px; font-weight: 700; }
.cube::after { content: ""; position: absolute; left: 0; right: 0; top: 61px; height: 6px; background: #bababa; clip-path: polygon(6% 0, 94% 0, 100% 100%, 0 100%); }
.camera { position: absolute; left: 18px; top: 128px; display: flex; flex-direction: column; gap: 8px; }
.camera button { width: 34px; height: 34px; border: 1px solid #aaabae; border-radius: 50%; background: #fafafa; }
.dim { position: absolute; height: 28px; padding: 0; border-radius: 3px; background: rgba(255, 255, 255, .78); font-family: "Liberation Sans", Arial, sans-serif; font-size: 14px; text-align: center; color: #222; }

.inspector { position: absolute; right: 12px; top: 12px; width: 256px; height: 176px; border-radius: 3px; background: rgba(250, 250, 250, .9); box-shadow: 0 1px 3px rgba(80, 90, 110, .3); }
.ihead { display: flex; align-items: center; height: 41px; background: #fff; border-bottom: 1px solid #dbe0e6; border-radius: 3px 3px 0 0; padding-right: 10px; }
.fold { width: 41px; height: 40px; border-right: 1px solid #dbe0e6; }
h2 { flex: 1; margin: 0 0 0 10px; padding-bottom: 2px; font-size: 14px; font-weight: 700; color: #3c5167; }
.ihead button:not(.fold) { width: 34px; height: 36px; }
.kinds { display: flex; justify-content: center; gap: 46px; padding-top: 24px; }
.kind { flex-direction: column; gap: 6px; width: 50px; color: #6d757d; line-height: 18px; }

.grid-opts { position: absolute; right: 10px; bottom: 11px; display: flex; flex-direction: column; align-items: flex-end; gap: 10px; }
.editgrid { width: 90px; height: 22px; padding-bottom: 2px; border: 1px solid #dfe2e7; border-radius: 3px; background: rgba(255, 255, 255, .6); color: #8d98a5; }
.grid-opts label { display: flex; align-items: center; gap: 7px; }
.grid-opts label > span:first-child { padding-bottom: 2px; }
.snap { display: flex; align-items: center; width: 72px; height: 22px; border: 1px solid #dbdde3; border-radius: 3px; background: #fff; color: #84878b; padding: 0 8px; }
.snap select { flex: 1; min-width: 0; padding: 0; }
.drawer { position: absolute; right: -6px; top: 257px; width: 16px; height: 47px; padding-left: 2px; border: 1px solid #dbe0e6; border-right: 0; background: #f4f5f7; z-index: 2; }

.side { width: 276px; flex: none; display: flex; flex-direction: column; background: #f0f0f3; }
.helpers { display: flex; justify-content: space-between; padding: 12px 8px 0; height: 80px; flex: none; border-bottom: 1px solid #dbe0e6; }
.helpers button { flex-direction: column; justify-content: flex-start; gap: 4px; width: 76px; line-height: 18px; }
.picker { position: relative; display: flex; flex-direction: column; justify-content: center; margin: 5px 6px 10px 5px; height: 63px; flex: none; padding: 0 10px 2px; border: 1px solid #e3e7ec; border-radius: 3px; background: #f4f5f7; box-shadow: 0 1px 4px #d4dae1; font-size: 15px; }
.picker label { font-size: 11px; line-height: 20px; }
.picker select { height: 24px; padding: 0; }
.picker svg { position: absolute; right: 17px; top: 29px; }
.shapes { position: relative; flex: 1; min-height: 0; overflow: hidden; display: grid; grid-template-columns: 1fr 1fr; grid-auto-rows: 152px; align-content: start; border-top: 1px solid #dbe0e6; margin: 0 6px; padding: 22px 6px 0; }
.shapes button { flex-direction: column; justify-content: flex-start; line-height: 18px; color: #64748a; }
.shapes span { margin-top: -4px; }
.thumb { position: absolute; right: -1px; top: 0; width: 8px; height: 88px; border-radius: 4px; background: #c1c1c1; }

.taskbar { display: flex; align-items: stretch; height: 40px; flex: none; padding-left: 1px; background: linear-gradient(90deg, #202020 40%, #2d1c1e 48%, #2c1b1d 52%, #202020 56%); color: #fff; font-family: "Open Sans", sans-serif; }
.app { width: 49px; }
.app.explorer { box-shadow: inset 0 -2px #76b9ed; }
.app.chrome { background: #4c4c4c; box-shadow: inset 0 -2px #76b9ed; }
.weather { gap: 9px; font-size: 13px; margin-right: 14px; }
.tray { display: flex; align-items: center; gap: 9px; }
.lang { align-self: center; margin: 0 11px 0 10px; }
.clock { display: flex; flex-direction: column; justify-content: center; align-items: center; font-size: 11px; line-height: 18px; width: 60px; }
.notif { width: 52px; }
.peek { width: 1px; background: #777; margin-right: 4px; }
</style>
